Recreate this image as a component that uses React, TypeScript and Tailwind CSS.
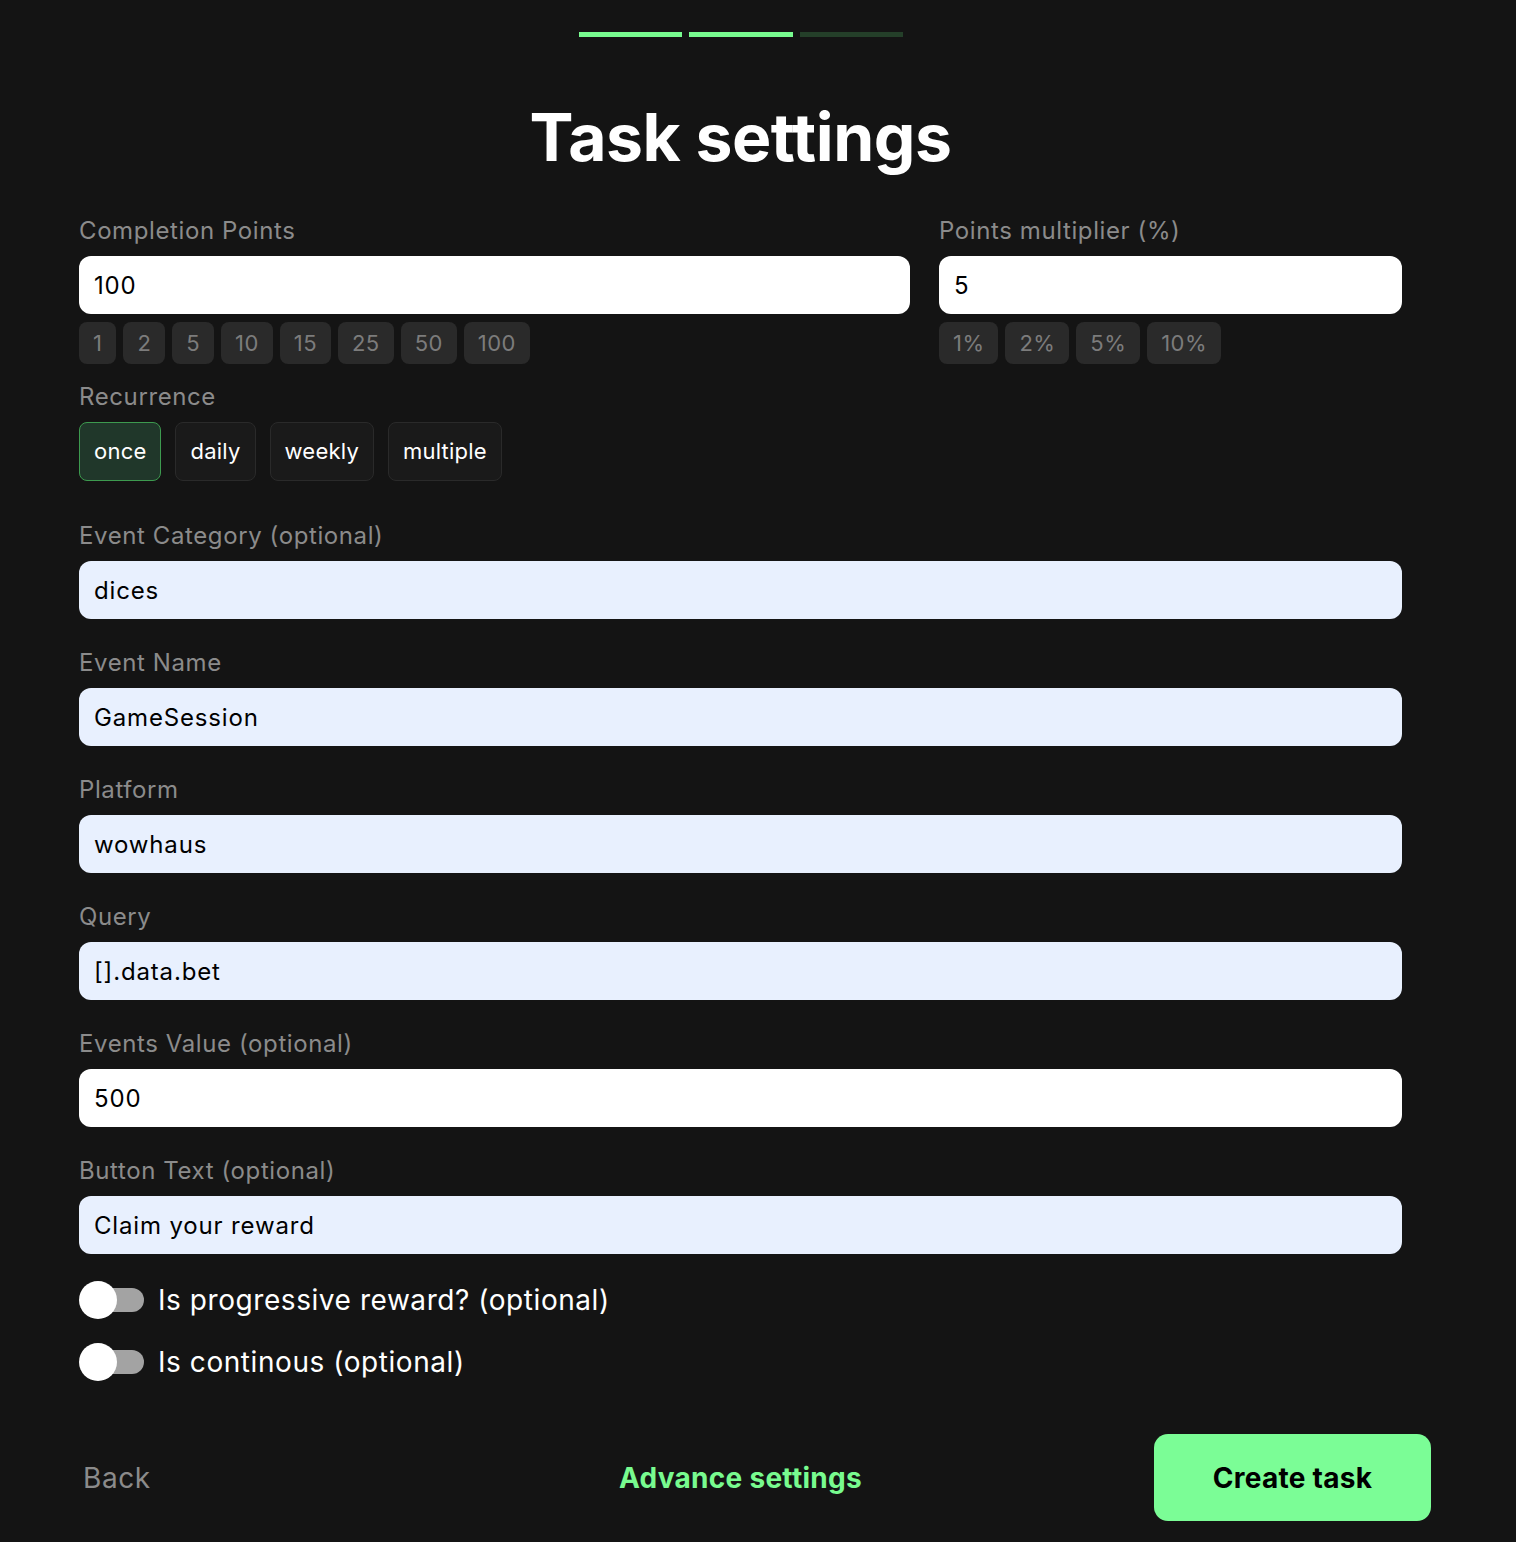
import React, { useState } from "react";

const font = { fontFamily: "Inter, 'Noto Sans', sans-serif" };

const pointChips = ["1", "2", "5", "10", "15", "25", "50", "100"];
const percentChips = ["1%", "2%", "5%", "10%"];
const recurrences = ["once", "daily", "weekly", "multiple"];

const Label = ({ children }: { children: React.ReactNode }) => (
  <div className="text-[24px] leading-[32px] tracking-[0.025em] text-[#8b8b8b] mb-[9px]">{children}</div>
);

const Field = ({ value, autofill = false }: { value: string; autofill?: boolean }) => (
  <input
    defaultValue={value}
    className={`w-full h-[58px] rounded-[12px] px-[15px] text-[24px] tracking-[0.035em] text-black outline-none ${
      autofill ? "bg-[#e8f0fe]" : "bg-white"
    }`}
  />
);

const Chip = ({ children }: { children: React.ReactNode }) => (
  <button className="h-[42px] px-[14px] rounded-[8px] bg-[#2a2a2a] text-[22px] tracking-[0.02em] text-[#7c7c7c]">
    {children}
  </button>
);

const Toggle = ({ label }: { label: string }) => {
  const [on, setOn] = useState(false);
  return (
    <div className="flex items-center h-[38px]">
      <button onClick={() => setOn(!on)} className="relative w-[65px] h-[38px] shrink-0">
        <span className="absolute left-[6px] right-0 top-[7px] h-[24px] rounded-full bg-[#a3a3a3]" />
        <span
          className={`absolute top-0 h-[38px] w-[38px] rounded-full bg-white ${on ? "left-[27px]" : "left-0"}`}
        />
      </button>
      <span className="ml-[14px] text-[28px] tracking-[0.02em] text-white">{label}</span>
    </div>
  );
};

export default function App() {
  const [recurrence, setRecurrence] = useState("once");

  return (
    <div style={font} className="min-h-screen w-full bg-[#141414] pt-[32px] pb-[21px]">
      <div className="ml-[79px] w-[1323px]">
        <div className="flex justify-center gap-[7px]">
          <div className="w-[103px] h-[5px] bg-[#78fb8f]" />
          <div className="w-[104px] h-[5px] bg-[#78fb8f]" />
          <div className="w-[103px] h-[5px] bg-[#243f29]" />
        </div>

        <h1 className="mt-[64px] text-center text-[66px] leading-[72px] font-bold text-white tracking-[-0.5px]">
          Task settings
        </h1>

        <div className="mt-[42px] grid grid-cols-[831px_463px] gap-x-[29px]">
          <div>
            <Label>Completion Points</Label>
            <Field value="100" />
            <div className="mt-[8px] flex gap-[7px]">
              {pointChips.map((c) => (
                <Chip key={c}>{c}</Chip>
              ))}
            </div>
          </div>
          <div>
            <Label>Points multiplier (%)</Label>
            <Field value="5" />
            <div className="mt-[8px] flex gap-[7px]">
              {percentChips.map((c) => (
                <Chip key={c}>{c}</Chip>
              ))}
            </div>
          </div>
        </div>

        <div className="mt-[17px]">
          <Label>Recurrence</Label>
          <div className="flex gap-[14px]">
            {recurrences.map((r) => (
              <button
                key={r}
                onClick={() => setRecurrence(r)}
                className={`h-[59px] px-[14px] rounded-[8px] border text-[22px] tracking-[0.01em] text-white ${
                  recurrence === r ? "bg-[#20372a] border-[#3d9a4f]" : "bg-[#1a1a1a] border-[#2a2a2a]"
                }`}
              >
                {r}
              </button>
            ))}
          </div>
        </div>

        <div className="mt-[39px] flex flex-col gap-[28px]">
          <div>
            <Label>Event Category (optional)</Label>
            <Field value="dices" autofill />
          </div>
          <div>
            <Label>Event Name</Label>
            <Field value="GameSession" autofill />
          </div>
          <div>
            <Label>Platform</Label>
            <Field value="wowhaus" autofill />
          </div>
          <div>
            <Label>Query</Label>
            <Field value="[].data.bet" autofill />
          </div>
          <div>
            <Label>Events Value (optional)</Label>
            <Field value="500" />
          </div>
          <div>
            <Label>Button Text (optional)</Label>
            <Field value="Claim your reward" autofill />
          </div>
        </div>

        <div className="mt-[27px] flex flex-col gap-[24px]">
          <Toggle label="Is progressive reward? (optional)" />
          <Toggle label="Is continous (optional)" />
        </div>

        <div className="mt-[53px] grid grid-cols-[1fr_auto_1fr] items-center">
          <div>
            <button className="ml-[4px] text-[28px] tracking-[0.02em] text-[#8b8b8b]">Back</button>
          </div>
          <button className="text-[28px] font-bold tracking-[0.01em] text-[#78fb8f]">Advance settings</button>
          <div className="flex justify-end mr-[-29px]">
            <button className="w-[277px] h-[87px] rounded-[14px] bg-[#7bfd96] text-[28px] font-bold tracking-[0.01em] text-black">
              Create task
            </button>
          </div>
        </div>
      </div>
    </div>
  );
}
